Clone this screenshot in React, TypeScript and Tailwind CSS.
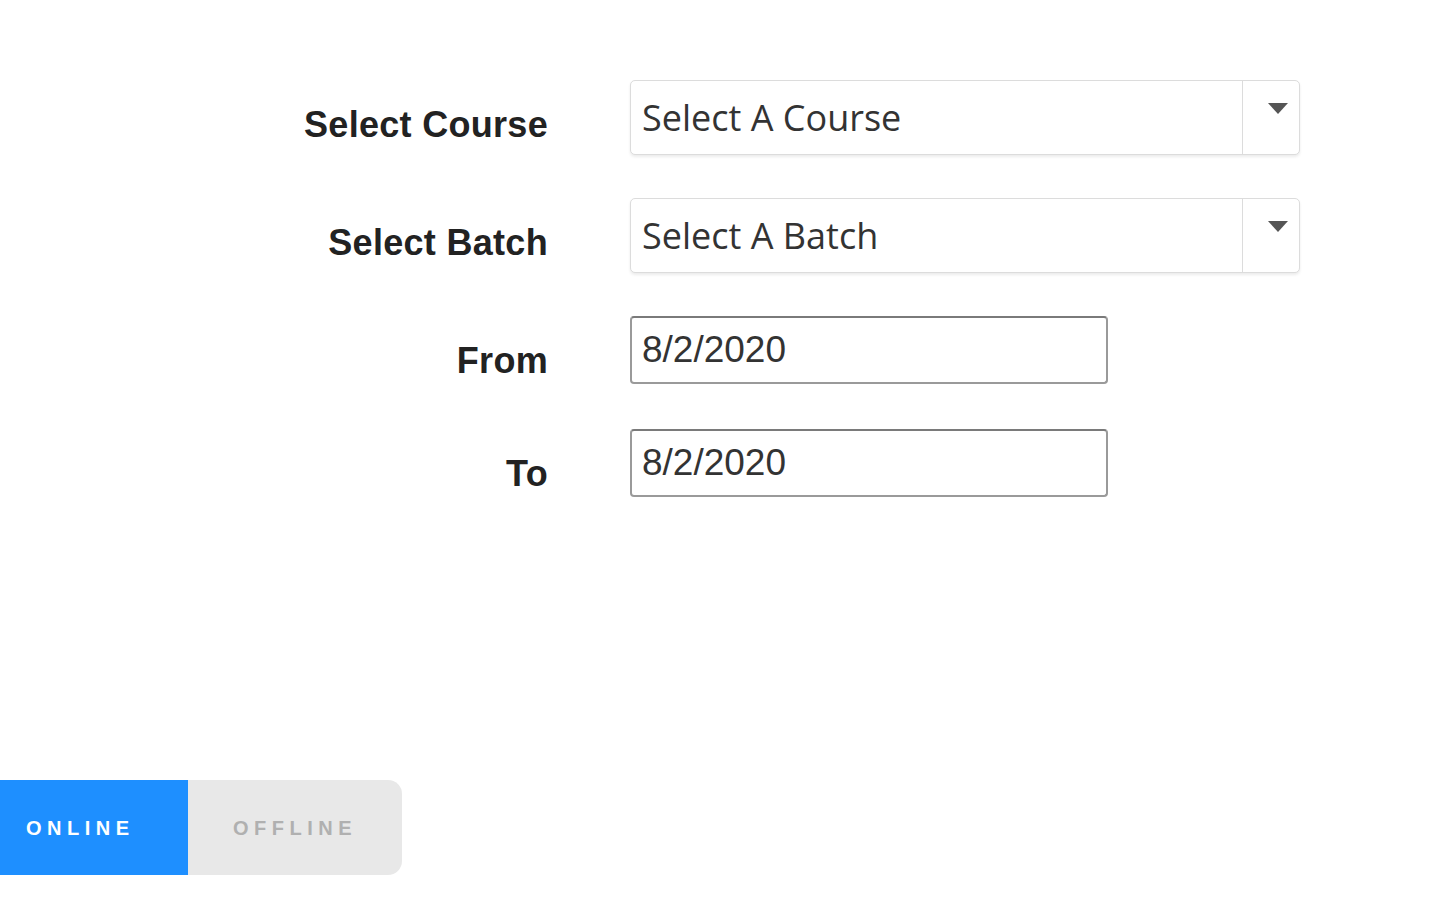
import React, { useState } from 'react';

const labelFont = { fontFamily: '"Liberation Sans", Arial, sans-serif' };

function SelectBox({ placeholder }: { placeholder: string }) {
  return (
    <div className="flex h-[75px] w-[670px] items-stretch rounded-[5px] border border-[#dcdcdc] bg-white shadow-[0_2px_3px_rgba(0,0,0,0.08)]">
      <div
        className="flex flex-1 items-center pl-[11px] text-[36px] text-[#333]"
        style={{ fontFamily: '"Open Sans", sans-serif' }}
      >
        {placeholder}
      </div>
      <div className="flex w-[57px] justify-end border-l border-[#dcdcdc] pt-[22px] pr-[11px]">
        <svg width="20" height="11" viewBox="0 0 20 11">
          <path d="M0 0 L20 0 L10 11 Z" fill="#555" />
        </svg>
      </div>
    </div>
  );
}

function DateBox({ value }: { value: string }) {
  return (
    <div
      className="flex h-[68px] w-[478px] items-center rounded-[4px] border-2 border-[#9a9a9a] border-t-[#7a7a7a] bg-white pb-[1px] pl-[10px] text-[37px] leading-[44px] text-[#333]"
      style={labelFont}
    >
      {value}
    </div>
  );
}

export default function App() {
  const [mode, setMode] = useState('online');

  return (
    <div className="min-h-[900px] w-full bg-white pt-[80px]">
      <div className="flex flex-col gap-[43px]">
        <div className="flex items-center">
          <div className="mt-[14px] w-[548px] text-right text-[36px] leading-[40px] font-bold tracking-[0.3px] text-[#222]" style={labelFont}>
            Select Course
          </div>
          <div className="ml-[82px]">
            <SelectBox placeholder="Select A Course" />
          </div>
        </div>
        <div className="flex items-center">
          <div className="mt-[14px] w-[548px] text-right text-[36px] leading-[40px] font-bold tracking-[0.3px] text-[#222]" style={labelFont}>
            Select Batch
          </div>
          <div className="ml-[82px]">
            <SelectBox placeholder="Select A Batch" />
          </div>
        </div>
        <div className="flex items-center">
          <div className="mt-[22px] w-[548px] text-right text-[36px] leading-[40px] font-bold tracking-[0.3px] text-[#222]" style={labelFont}>
            From
          </div>
          <div className="ml-[82px]">
            <DateBox value="8/2/2020" />
          </div>
        </div>
        <div className="mt-[2px] flex items-center">
          <div className="mt-[22px] w-[548px] text-right text-[36px] leading-[40px] font-bold tracking-[0.3px] text-[#222]" style={labelFont}>
            To
          </div>
          <div className="ml-[82px]">
            <DateBox value="8/2/2020" />
          </div>
        </div>
      </div>

      <div className="mt-[283px] flex h-[95px] w-[402px]" style={labelFont}>
        <button
          onClick={() => setMode('online')}
          className={
            mode === 'online'
              ? 'flex w-[188px] items-center pl-[26px] text-[20px] font-bold tracking-[5.5px] text-white bg-[#1e8fff]'
              : 'flex w-[188px] items-center pl-[26px] text-[20px] font-bold tracking-[5.5px] text-[#aaa] bg-[#e8e8e8]'
          }
        >
          ONLINE
        </button>
        <button
          onClick={() => setMode('offline')}
          className={
            mode === 'offline'
              ? 'flex w-[214px] items-center rounded-r-[14px] pl-[45px] text-[20px] font-bold tracking-[5.5px] text-white bg-[#1e8fff]'
              : 'flex w-[214px] items-center rounded-r-[14px] pl-[45px] text-[20px] font-bold tracking-[5.5px] text-[#b0b0b0] bg-[#e8e8e8]'
          }
        >
          OFFLINE
        </button>
      </div>
    </div>
  );
}
